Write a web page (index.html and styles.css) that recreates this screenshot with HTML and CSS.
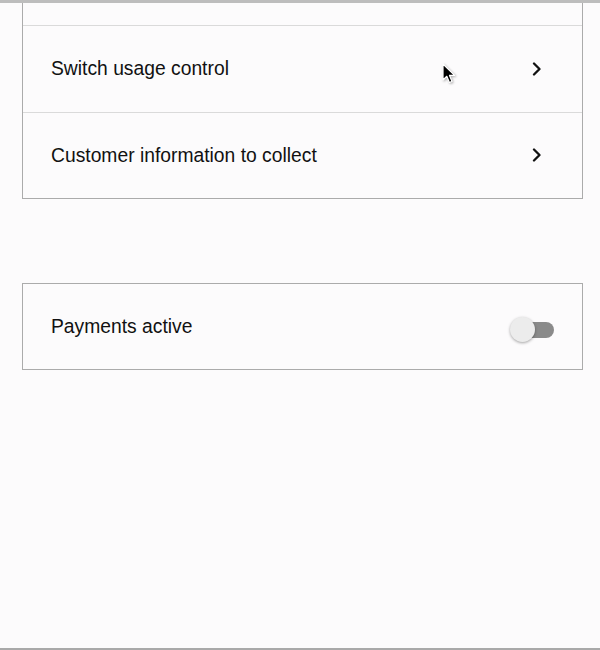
FILE: index.html
```html
<!DOCTYPE html>
<html>
<head>
<meta charset="utf-8">
<link rel="stylesheet" href="styles.css">
</head>
<body>
<div class="topbar"></div>
<div class="card card-first">
  <div class="row row-stub"></div>
  <div class="row">
    <span class="label">Switch usage control</span>
    <svg class="chev" width="10" height="14" viewBox="0 0 10 14"><path d="M2 1.5 L7.5 7 L2 12.5" fill="none" stroke="#111" stroke-width="2.3" stroke-linecap="round" stroke-linejoin="round"/></svg>
  </div>
  <div class="row row-last">
    <span class="label">Customer information to collect</span>
    <svg class="chev" width="10" height="14" viewBox="0 0 10 14"><path d="M2 1.5 L7.5 7 L2 12.5" fill="none" stroke="#111" stroke-width="2.3" stroke-linecap="round" stroke-linejoin="round"/></svg>
  </div>
</div>
<div class="card card-second">
  <div class="row row-last">
    <span class="label">Payments active</span>
    <span class="toggle"><span class="track"></span><span class="knob"></span></span>
  </div>
</div>
<div class="bottombar"></div>
<svg class="cursor" width="16" height="22" viewBox="0 0 16 22"><path d="M1 1 L1 17 L4.8 13.3 L7.4 19.5 L10 18.4 L7.5 12.4 L12.6 12.4 Z" fill="#000" stroke="#fff" stroke-width="1.2" stroke-linejoin="round"/></svg>
</body>
</html>
```
FILE: styles.css
```css
html, body {
  margin: 0;
  padding: 0;
}
body {
  background: #fcfbfc;
  font-family: "Liberation Sans", Arial, Helvetica, sans-serif;
  color: #111;
  height: 650px;
  position: relative;
  overflow: hidden;
}
.topbar {
  height: 3px;
  background: #bdbdbd;
}
.card {
  margin: 0 17px 0 22px;
  border: 1px solid #ababab;
  background: #fcfbfc;
}
.card-first {
  border-top: none;
}
.card-second {
  margin-top: 84px;
}
.row {
  height: 86px;
  display: flex;
  align-items: center;
  justify-content: space-between;
  padding: 0 40px 0 28px;
  border-bottom: 1px solid #dadada;
}
.row-stub {
  height: 22px;
}
.row-last {
  height: 85px;
  border-bottom: none;
}
.label {
  font-size: 19.3px;
  letter-spacing: 0;
}
.chev {
  display: block;
  margin-top: -1px;
}
.toggle {
  position: relative;
  width: 44px;
  height: 26px;
  margin-top: 6px;
  margin-right: -12px;
}
.track {
  position: absolute;
  left: 12px;
  top: 5px;
  width: 32px;
  height: 16px;
  border-radius: 8px;
  background: #8a8a8a;
}
.knob {
  position: absolute;
  left: 0;
  top: 0;
  width: 25px;
  height: 25px;
  border-radius: 50%;
  background: #ececec;
  box-shadow: 0 1px 3px rgba(0, 0, 0, 0.35);
}
.bottombar {
  position: absolute;
  left: 0;
  right: 0;
  bottom: 0;
  height: 2px;
  background: #a9a9a9;
}
.cursor {
  position: absolute;
  left: 442px;
  top: 63px;
  filter: drop-shadow(1px 1px 1px rgba(0,0,0,0.3));
}
```
